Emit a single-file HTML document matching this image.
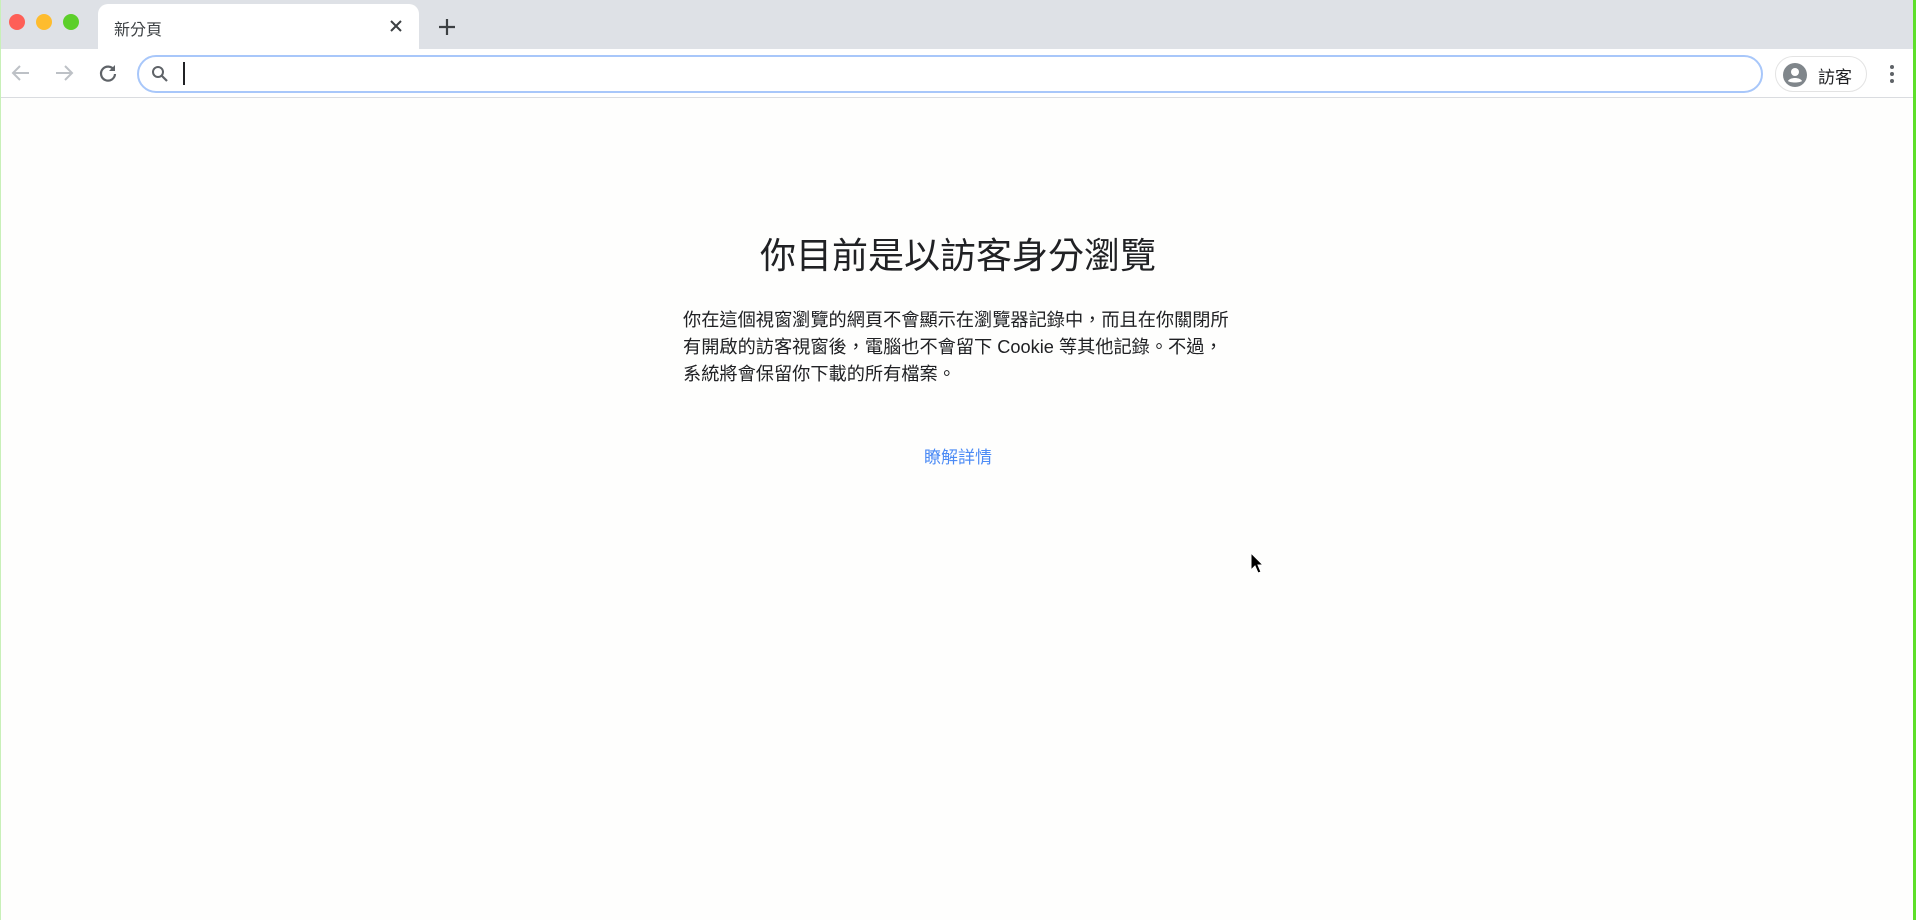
<!DOCTYPE html>
<html><head><meta charset="utf-8"><style>
*{margin:0;padding:0;box-sizing:border-box}
body{width:1916px;height:920px;background:#fefefd;position:relative;overflow:hidden;font-family:"Liberation Sans","Noto Sans CJK TC",sans-serif;color:#202124}
.strip{position:absolute;left:0;top:0;width:1916px;height:49px;background:#dee1e6}
.dot{position:absolute;top:14px;width:16px;height:16px;border-radius:50%}
.tab{position:absolute;left:98px;top:4px;width:321px;height:46px;background:#fff;border-radius:10px 10px 0 0}
.tab span{position:absolute;left:16px;top:12px;font-size:16px;color:#3c4043}
.toolbar{position:absolute;left:0;top:49px;width:1916px;height:49px;background:#fff;border-bottom:1px solid #dadce0}
.omni{position:absolute;left:137px;top:55px;width:1626px;height:38px;border:2px solid #a8c7fa;border-radius:19px;background:#fff}
.guest{position:absolute;left:1775px;top:56px;width:92px;height:36px;border:1px solid #e3e3e3;border-radius:18px;background:#fff}
.guest span{position:absolute;left:42px;top:6px;font-size:17px;color:#202124}
h1{position:absolute;left:0;width:1916px;top:227px;text-align:center;font-weight:400;font-size:36px;color:#202124}
p{position:absolute;left:683px;top:307px;white-space:nowrap;font-size:18.2px;line-height:27px;color:#202124}
.link{position:absolute;left:0;width:1916px;top:443px;text-align:center;font-size:17px;color:#4c8bf5}
</style></head><body>
<div class="strip"></div>
<div class="dot" style="left:9px;background:#fe5f57"></div>
<div class="dot" style="left:36px;background:#febc2e"></div>
<div class="dot" style="left:63px;background:#5ccf2a"></div>
<div class="tab"><span>新分頁</span>
<svg style="position:absolute;left:291px;top:15px" width="14" height="14" viewBox="0 0 14 14"><path d="M2 2L12 12M12 2L2 12" stroke="#3c4043" stroke-width="2"/></svg></div>
<svg style="position:absolute;left:438px;top:18px" width="18" height="18" viewBox="0 0 18 18"><path d="M9 1V17M1 9H17" stroke="#3c4043" stroke-width="2.2"/></svg>
<div class="toolbar"></div>
<svg style="position:absolute;left:11px;top:63px" width="20" height="20" viewBox="0 0 20 20"><path d="M18 10H3M9 3L2 10L9 17" stroke="#bdc1c6" stroke-width="2" fill="none"/></svg>
<svg style="position:absolute;left:54px;top:63px" width="20" height="20" viewBox="0 0 20 20"><path d="M2 10H17M11 3L18 10L11 17" stroke="#bdc1c6" stroke-width="2" fill="none"/></svg>
<svg style="position:absolute;left:98px;top:63px" width="20" height="20" viewBox="0 0 20 20"><path d="M16 7A7 7 0 1 0 17 11" stroke="#5f6368" stroke-width="2.2" fill="none"/><path d="M17 2V8H11Z" fill="#5f6368"/></svg>
<div class="omni"></div>
<svg style="position:absolute;left:151px;top:65px" width="18" height="18" viewBox="0 0 18 18"><circle cx="7" cy="7" r="5" stroke="#5f6368" stroke-width="2" fill="none"/><path d="M11 11L16 16" stroke="#5f6368" stroke-width="2.2"/></svg>
<div style="position:absolute;left:183px;top:62px;width:2px;height:23px;background:#202124"></div>
<div class="guest"><svg style="position:absolute;left:7px;top:6px" width="24" height="24" viewBox="0 0 24 24"><circle cx="12" cy="12" r="12" fill="#80868b"/><circle cx="12" cy="9" r="4" fill="#fff"/><path d="M5 18C7 14 17 14 19 18C17 20 7 20 5 18Z" fill="#fff"/></svg><span>訪客</span></div>
<svg style="position:absolute;left:1888px;top:64px" width="8" height="20" viewBox="0 0 8 20"><circle cx="4" cy="3" r="2" fill="#5f6368"/><circle cx="4" cy="10" r="2" fill="#5f6368"/><circle cx="4" cy="17" r="2" fill="#5f6368"/></svg>
<div style="position:absolute;left:1913px;top:0;width:3px;height:920px;background:#5ddf2a"></div>
<div style="position:absolute;left:0;top:0;width:1px;height:920px;background:#c8f0b8"></div>
<h1>你目前是以訪客身分瀏覽</h1>
<p>你在這個視窗瀏覽的網頁不會顯示在瀏覽器記錄中，而且在你關閉所<br>有開啟的訪客視窗後，電腦也不會留下 Cookie 等其他記錄。不過，<br>系統將會保留你下載的所有檔案。</p>
<div class="link">瞭解詳情</div>
<svg style="position:absolute;left:1250px;top:552px" width="16" height="24" viewBox="0 0 16 24"><path d="M1 1V18L5 14L8 21L11 20L8 13H13Z" fill="#000" stroke="#fff" stroke-width="1"/></svg>
</body></html>
